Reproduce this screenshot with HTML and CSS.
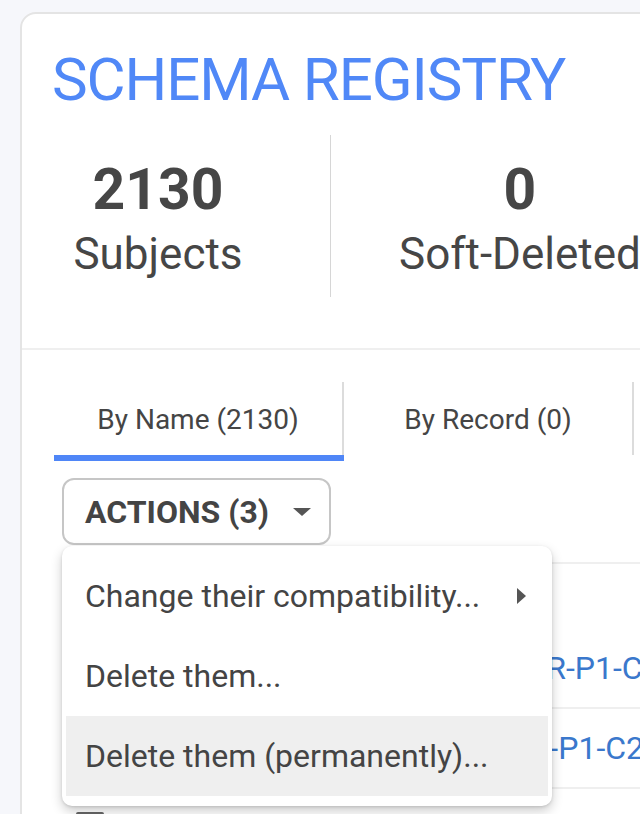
FILE: index.html
```html
<!DOCTYPE html>
<html lang="en">
<head>
<meta charset="utf-8">
<title>Schema Registry</title>
<link rel="stylesheet" href="styles.css">
</head>
<body>
<div class="card">
  <header class="card-head">
    <h1 class="title">SCHEMA REGISTRY</h1>
    <div class="stats">
      <div class="stat stat-first">
        <div class="stat-num">2130</div>
        <div class="stat-label">Subjects</div>
      </div>
      <div class="stat-sep"></div>
      <div class="stat">
        <div class="stat-num">0</div>
        <div class="stat-label">Soft-Deleted</div>
      </div>
    </div>
  </header>
  <section class="body">
    <nav class="tabs">
      <div class="tab active"><div class="tab-label">By Name (2130)</div></div>
      <div class="tab"><div class="tab-label">By Record (0)</div></div>
    </nav>
    <div class="actions-wrap">
      <button class="actions-btn" type="button">ACTIONS (3) <span class="caret"></span></button>
      <ul class="menu">
        <li class="menu-item">Change their compatibility... <span class="sub-arrow"></span></li>
        <li class="menu-item">Delete them...</li>
        <li class="menu-item hover">Delete them (permanently)...</li>
      </ul>
    </div>
    <div class="table">
      <div class="row row-head"></div>
      <div class="row"><span class="check"></span><a class="subject">accounting-ledger-events-R-P1-C0</a></div>
      <div class="row"><span class="check"></span><a class="subject">accounting-ledger-event-R-P1-C2</a></div>
      <div class="row"><span class="check"></span><a class="subject">accounting-ledger-events-R-P1-C3</a></div>
    </div>
  </section>
</div>
</body>
</html>
```

FILE: styles.css
```css
html, body {
  margin: 0;
  padding: 0;
  background: #f6f7fb;
  overflow: hidden;
  height: 814px;
}
body {
  font-family: Roboto, "Noto Sans", Arial, sans-serif;
  color: #454545;
}
.card {
  margin: 12px 0 0 20px;
  width: 760px;
  background: #fff;
  border: 2px solid #e4e4e4;
  border-radius: 16px;
  min-height: 900px;
}
.card-head {
  padding: 36px 0 0 30px;
  border-bottom: 2px solid #efefef;
}
.title {
  margin: 0;
  font-weight: 400;
  font-size: 60px;
  line-height: 60px;
  color: #5088f7;
  letter-spacing: -1.1px;
}
.stats {
  display: flex;
  gap: 68px;
  margin-top: 25px;
  margin-bottom: 51px;
  padding-left: 2px;
}
.stat {
  display: flex;
  flex-direction: column;
  align-items: center;
  padding-top: 22px;
}
.stat-first {
  width: 208px;
}
.stat-num {
  font-size: 57px;
  font-weight: 700;
  line-height: 1.15;
  color: #464646;
}
.stat-label {
  font-size: 44px;
  line-height: 1.15;
  margin-top: 6px;
  color: #464646;
}
.stat-sep {
  width: 1px;
  height: 162px;
  background: #d6d6d6;
}
.body {
  padding: 32px 0 0 32px;
}
.tabs {
  display: flex;
}
.tab {
  width: 290px;
  border-bottom: 6px solid transparent;
}
.tab.active {
  border-bottom-color: #4f86f7;
}
.tab-label {
  border-right: 2px solid #dcdcdc;
  text-align: center;
  font-size: 28px;
  line-height: 1.15;
  padding: 22px 0 19px;
  color: #454545;
}
.actions-wrap {
  position: relative;
  margin: 17px 0 0 8px;
  display: inline-block;
}
.actions-btn {
  display: flex;
  align-items: center;
  gap: 24px;
  height: 67px;
  padding: 0 18px 0 21px;
  background: #fff;
  border: 2px solid #c6c6c6;
  border-radius: 12px;
  font-family: Roboto, Arial, sans-serif;
  font-size: 32px;
  font-weight: 700;
  color: #444;
  cursor: pointer;
}
.caret {
  width: 0;
  height: 0;
  border-left: 9px solid transparent;
  border-right: 9px solid transparent;
  border-top: 8px solid #555;
}
.menu {
  position: absolute;
  top: 68px;
  left: 0;
  z-index: 5;
  width: 490px;
  margin: 0;
  padding: 10px 4px;
  box-sizing: border-box;
  list-style: none;
  background: #fff;
  border-radius: 10px;
  box-shadow: 0 5px 12px rgba(0,0,0,0.2), 0 1px 3px rgba(0,0,0,0.12);
}
.menu-item {
  height: 80px;
  display: flex;
  align-items: center;
  justify-content: space-between;
  padding: 0 22px 0 19px;
  font-size: 32px;
  color: #444;
}
.menu-item.hover {
  background: #efefef;
}
.sub-arrow {
  width: 0;
  height: 0;
  border-top: 8px solid transparent;
  border-bottom: 8px solid transparent;
  border-left: 9px solid #555;
}
.table {
  margin: 17px 0 0 12px;
  border-top: 2px solid #efefef;
}
.row {
  height: 78px;
  display: flex;
  align-items: center;
  border-bottom: 2px solid #efefef;
  padding-left: 10px;
}
.row-head {
  height: 65px;
  border-bottom: none;
}
.check {
  width: 22px;
  height: 22px;
  border: 3px solid #666;
  border-radius: 2px;
  flex: none;
  margin-bottom: 5px;
}
.subject {
  margin-left: 75px;
  font-size: 32px;
  color: #3a78cc;
  text-decoration: none;
  white-space: nowrap;
}
```
